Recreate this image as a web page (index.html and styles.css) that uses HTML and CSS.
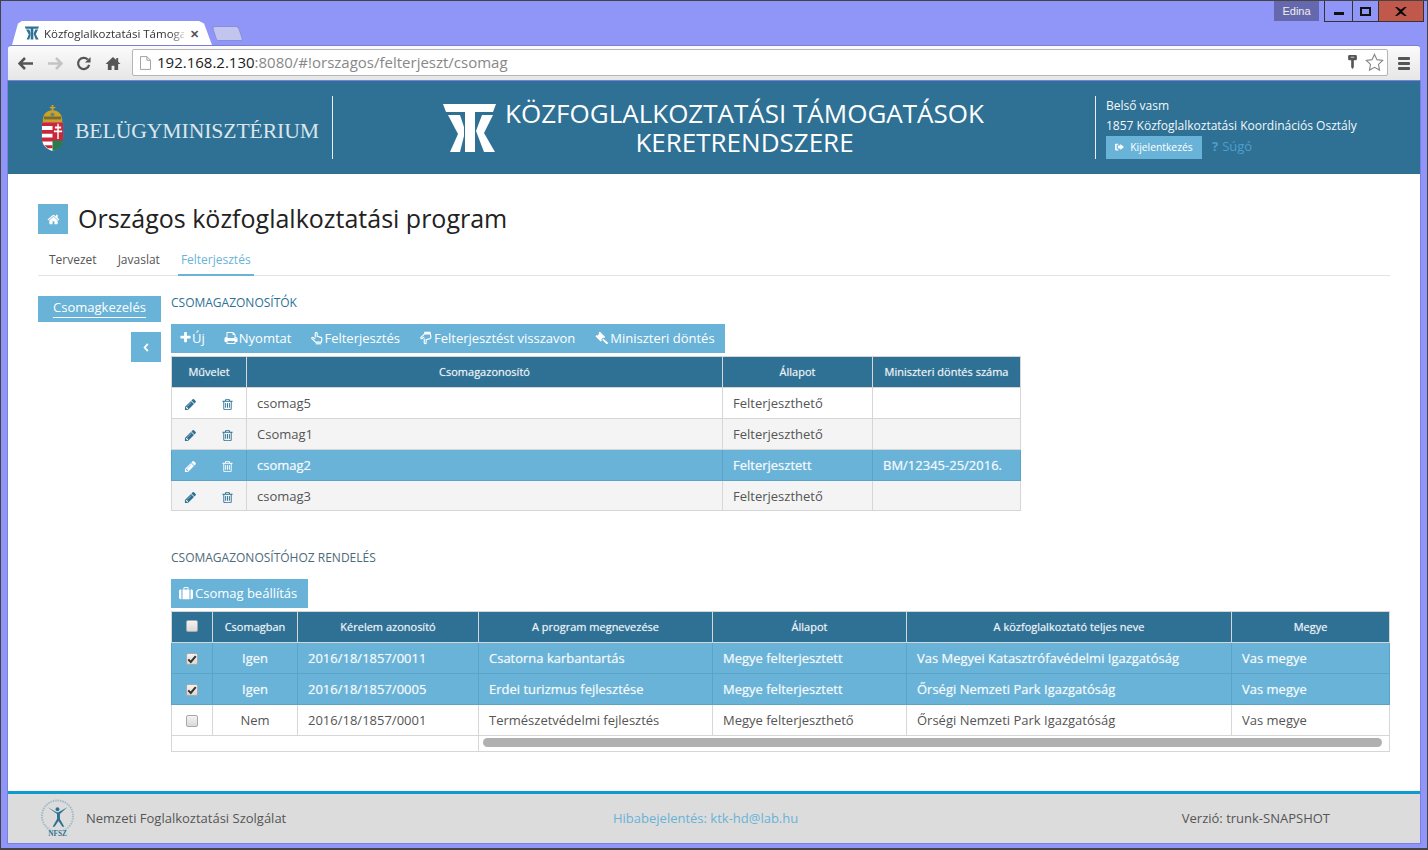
FILE: index.html
```html
<!DOCTYPE html>
<html lang="hu">
<head>
<meta charset="utf-8">
<title>Közfoglalkoztatási Támogatások Keretrendszere</title>
<link rel="stylesheet" href="styles.css">
</head>
<body>
<svg class="defs" aria-hidden="true">
  <symbol id="i-ktk" viewBox="0 0 60 56"><path d="M3 4H56L53 12H35V52H25V12H6Z"/><path d="M8 15H20L24 27V36L20 52H10L18 34Z"/><path d="M36 31L42 15H53L44 33L55 52H44Z"/></symbol>
  <symbol id="i-home" viewBox="0 0 1792 1792"><path d="M1472 992v480q0 26-19 45t-45 19h-384v-384h-256v384h-384q-26 0-45-19t-19-45v-480q0-1 .5-3t.5-3l575-474 575 474q1 2 1 6zm223-69l-62 74q-8 9-21 11h-3q-13 0-21-7l-692-577-692 577q-12 8-24 7-13-2-21-11l-62-74q-8-10-7-23.500t11-21.500l719-599q32-26 76-26t76 26l244 204v-195q0-14 9-23t23-9h192q14 0 23 9t9 23v408l219 182q10 8 11 21.500t-7 23.500z"/></symbol>
  <symbol id="i-plus" viewBox="0 0 1792 1792"><path d="M1600 736v192q0 40-28 68t-68 28h-416v416q0 40-28 68t-68 28h-192q-40 0-68-28t-28-68v-416h-416q-40 0-68-28t-28-68v-192q0-40 28-68t68-28h416v-416q0-40 28-68t68-28h192q40 0 68 28t28 68v416h416q40 0 68 28t28 68z"/></symbol>
  <symbol id="i-pencil" viewBox="0 0 1792 1792"><path d="M491 1536l91-91-235-235-91 91v107h128v128h107zm523-928q0-22-22-22-10 0-17 7l-542 542q-7 7-7 17 0 22 22 22 10 0 17-7l542-542q7-7 7-17zm-54-192l416 416-832 832h-416v-416zm683 96q0 53-37 90l-166 166-416-416 166-165q36-38 90-38 53 0 91 38l235 234q37 39 37 91z"/></symbol>
  <symbol id="i-trash" viewBox="0 0 1792 1792"><path d="M704 736v576q0 14-9 23t-23 9h-64q-14 0-23-9t-9-23v-576q0-14 9-23t23-9h64q14 0 23 9t9 23zm256 0v576q0 14-9 23t-23 9h-64q-14 0-23-9t-9-23v-576q0-14 9-23t23-9h64q14 0 23 9t9 23zm256 0v576q0 14-9 23t-23 9h-64q-14 0-23-9t-9-23v-576q0-14 9-23t23-9h64q14 0 23 9t9 23zm128 724v-948h-896v948q0 22 7 40.500t14.500 27 10.500 8.500h832q3 0 10.500-8.500t14.500-27 7-40.500zm-672-1076h448l-48-117q-7-9-17-11h-317q-10 2-17 11zm928 32v64q0 14-9 23t-23 9h-96v948q0 83-47 143.500t-113 60.500h-832q-66 0-113-58.500t-47-141.500v-952h-96q-14 0-23-9t-9-23v-64q0-14 9-23t23-9h309l70-167q15-37 54-63t79-26h320q40 0 79 26t54 63l70 167h309q14 0 23 9t9 23z"/></symbol>
  <symbol id="i-print" viewBox="0 0 1792 1792"><path d="M448 1536h896v-256h-896v256zm0-640h896v-384h-160q-40 0-68-28t-28-68v-160h-640v640zm1152 64q0-26-19-45t-45-19-45 19-19 45 19 45 45 19 45-19 19-45zm128 0v416q0 13-9.500 22.500t-22.500 9.500h-224v160q0 40-28 68t-68 28h-960q-40 0-68-28t-28-68v-160h-224q-13 0-22.500-9.500t-9.500-22.500v-416q0-79 56.500-135.500t135.500-56.500h64v-544q0-40 28-68t68-28h672q40 0 88 20t76 48l152 152q28 28 48 76t20 88v256h64q79 0 135.500 56.500t56.500 135.500z"/></symbol>
  <symbol id="i-hand-up" viewBox="0 0 16 16"><path class="outline" d="M6 7.500V2.600a1.100 1.100 0 0 1 2.200 0V6l4.300 1.300c.8.300 1.200.9 1.100 1.700l-.6 3.700H6.500L2.200 8.800c-.6-.7.300-1.900 1.200-1.300L6 9.200"/><path class="outline" d="M6.500 14.600h6.200"/></symbol>
  <symbol id="i-hand-down" viewBox="0 0 16 16"><path class="outline" d="M6 8.500v4.900a1.100 1.100 0 0 0 2.200 0V10l4.300-1.300c.8-.3 1.200-.9 1.100-1.700L13 3.300H6.500L2.200 7.200c-.6.700.3 1.900 1.200 1.300L6 6.800"/><path class="fillbar" d="M6 .8h7.200v2.500H6z"/></symbol>
  <symbol id="i-gavel" viewBox="0 0 16 16"><path d="M6.800 .8l6 6-1.500 1.500-.8-.8-2.200 2.200.8.800-1.500 1.500-6-6 1.500-1.500.8.800L6.100 2.600l-.8-.8z"/><path d="M9.400 10l1.200-1.200 4.900 4.100c.6.500.6 1.200.1 1.700s-1.200.5-1.700-.1z"/></symbol>
  <symbol id="i-suitcase" viewBox="0 0 16 14"><path d="M5 1.500C5 .7 5.700 0 6.500 0h3c.8 0 1.500.7 1.500 1.500V3h-1.200V1.300H6.200V3H5z"/><path d="M4 3h8v11H4zM2.800 3v11H1.800C.8 14 0 13.200 0 12.200V4.800C0 3.800.8 3 1.800 3zM13.200 3h1C15.200 3 16 3.800 16 4.800v7.400c0 1-.8 1.800-1.800 1.800h-1z"/></symbol>
  <symbol id="i-signout" viewBox="0 0 16 14"><path d="M1.500 1H6v2H3v8h3v2H1.500C.7 13 0 12.300 0 11.500v-9C0 1.700.7 1 1.500 1z"/><path d="M9.500 1.500L16 7l-6.500 5.500V9.500H5v-5h4.500z"/></symbol>
  <symbol id="i-check" viewBox="0 0 12 12"><path d="M1.500 6.500L4.500 9.500 10.500 2.500" fill="none" stroke="#333" stroke-width="2.400"/></symbol>
</svg>

<div class="window">
  <div class="titlebar">
    <div class="tabs">
      <div class="tab">
        <svg class="tab-logo"><use href="#i-ktk"/></svg>
        <span class="tab-title">Közfoglalkoztatási Támoga</span>
        <span class="tab-close">✕</span>
      </div>
      <div class="tab-new"></div>
    </div>
    <div class="winctl">
      <span class="winuser">Edina</span>
      <div class="winbtns">
        <span class="winbtn"><i class="ico-min"></i></span>
        <span class="winbtn winbtn-max"><i class="ico-max"></i></span>
        <span class="winbtn winbtn-close"><svg viewBox="0 0 12 10" class="ico-x"><path d="M1 0l4.800 3.400L10.600 0h1.200L7 5l4.800 5h-1.200L5.800 6.600 1 10H0l4.600-5L0 0z" stroke="#111" stroke-width="1"/></svg></span>
      </div>
    </div>
  </div>

  <div class="toolbar">
    <div class="navbtns">
      <svg class="nav" viewBox="0 0 16 14"><path d="M7 1.500L1.500 7 7 12.500M2 7h13" fill="none" stroke="#555" stroke-width="2.600"/></svg>
      <svg class="nav" viewBox="0 0 16 14"><path d="M9 1.500L14.500 7 9 12.500M14 7H1" fill="none" stroke="#c4c4c4" stroke-width="2.600"/></svg>
      <svg class="nav" viewBox="0 0 16 16"><path d="M13.500 9.500A6 6 0 1 1 12 3.700" fill="none" stroke="#555" stroke-width="2.400"/><path d="M15 1v6H9z" fill="#555"/></svg>
      <svg class="nav" viewBox="0 0 16 16"><path d="M8 1L0 8.500h2.500V15h4v-4.500h3V15h4V8.500H16L13.500 6V2h-2v2.200z" fill="#555"/></svg>
    </div>
    <div class="omnibox">
      <svg class="doc" viewBox="0 0 12 15"><path d="M.5.500h7l4 4v10H.500z M7.500.500v4h4" fill="#fff" stroke="#999"/></svg>
      <span class="url"><span class="url-host">192.168.2.130</span>:8080/#!orszagos/felterjeszt/csomag</span>
      <svg class="key" viewBox="0 0 10 16"><path d="M1.500 0h7A1.500 1.500 0 0 1 10 1.500v3A1.500 1.500 0 0 1 8.500 6h-2v8L5 16l-1.500-2V6h-2A1.500 1.500 0 0 1 0 4.500v-3A1.500 1.500 0 0 1 1.500 0z" fill="#555"/><path d="M3 2h4v1H3z" fill="#ddd"/></svg>
      <svg class="star" viewBox="0 0 20 20"><path d="M10 1.500l2.600 5.500 6 .8-4.400 4.200 1.100 6-5.300-2.900-5.300 2.900 1.100-6L1.400 7.800l6-.8z" fill="#fff" stroke="#888" stroke-width="1.200"/></svg>
    </div>
    <div class="burger"><i></i><i></i><i></i></div>
  </div>

  <div class="page">
    <header class="site-header">
      <div class="brand">
        <svg class="crest" viewBox="0 0 24 48">
          <path d="M11 0h2v2h2v1.500h-2V6h-2V3.500H9V2h2z" fill="#c9a227"/>
          <path d="M2 18C1 10 6 5.500 12 5.500S23 10 22 18z" fill="#c9a227"/>
          <path d="M3 12h18v3H3z" fill="#7b6a35"/>
          <circle cx="12" cy="10" r="2" fill="#6b7f86"/>
          <path d="M1 18h22v17c0 7-5 11-11 13C6 46 1 42 1 35z" fill="#fff"/>
          <path d="M1 18h11v4H1zM1 26h11v4H1zM1 34h11v4H1zM3.500 42H12v3H7zM12 18h11v20H12z" fill="#c8283a"/>
          <path d="M17 19.500h1.500v3H21v2h-2.500v2H22v2h-3.500v7H17v-7h-3.500v-2H17v-2h-2.500v-2H17z" fill="#fff"/>
          <path d="M12 37h11c0 6-5 10-11 11z" fill="#2c7a52"/>
        </svg>
        <span class="brand-name">Belügyminisztérium</span>
      </div>
      <div class="app-title">
        <svg class="app-logo"><use href="#i-ktk"/></svg>
        <h1 class="app-name">KÖZFOGLALKOZTATÁSI TÁMOGATÁSOK<br>KERETRENDSZERE</h1>
      </div>
      <div class="userbox">
        <div class="user-line user-name">Belső vasm</div>
        <div class="user-line">1857 Közfoglalkoztatási Koordinációs Osztály</div>
        <div class="user-actions">
          <a class="logout"><svg class="ic-signout"><use href="#i-signout"/></svg>Kijelentkezés</a>
          <a class="help"><b>?</b>Súgó</a>
        </div>
      </div>
    </header>

    <main class="content">
      <div class="page-title">
        <span class="home-box"><svg class="ic-home"><use href="#i-home"/></svg></span>
        <h2>Országos közfoglalkoztatási program</h2>
      </div>
      <nav class="tabs-nav">
        <a class="nav-tab">Tervezet</a>
        <a class="nav-tab">Javaslat</a>
        <a class="nav-tab active">Felterjesztés</a>
      </nav>
      <div class="cols">
        <aside class="side">
          <a class="side-item"><span>Csomagkezelés</span></a>
          <a class="side-toggle"><svg viewBox="0 0 8 12" class="ic-chev"><path d="M6 2L2.500 6 6 10" fill="none" stroke="#fff" stroke-width="2"/></svg></a>
        </aside>
        <section class="main">
          <h3 class="sec-title">CSOMAGAZONOSÍTÓK</h3>
          <div class="btnbar">
            <a class="btn"><svg class="ic ic-plus"><use href="#i-plus"/></svg>Új</a>
            <a class="btn"><svg class="ic"><use href="#i-print"/></svg>Nyomtat</a>
            <a class="btn"><svg class="ic ic-hand"><use href="#i-hand-up"/></svg>Felterjesztés</a>
            <a class="btn"><svg class="ic"><use href="#i-hand-down"/></svg>Felterjesztést visszavon</a>
            <a class="btn"><svg class="ic ic-gavel"><use href="#i-gavel"/></svg>Miniszteri döntés</a>
          </div>
          <table class="grid grid-a">
            <colgroup><col class="a1"><col class="a2"><col class="a3"><col class="a4"></colgroup>
            <thead><tr><th>Művelet</th><th>Csomagazonosító</th><th>Állapot</th><th>Miniszteri döntés száma</th></tr></thead>
            <tbody>
              <tr><td class="ops"><svg><use href="#i-pencil"/></svg><svg><use href="#i-trash"/></svg></td><td>csomag5</td><td>Felterjeszthető</td><td></td></tr>
              <tr class="alt"><td class="ops"><svg><use href="#i-pencil"/></svg><svg><use href="#i-trash"/></svg></td><td>Csomag1</td><td>Felterjeszthető</td><td></td></tr>
              <tr class="sel"><td class="ops"><svg><use href="#i-pencil"/></svg><svg><use href="#i-trash"/></svg></td><td>csomag2</td><td>Felterjesztett</td><td>BM/12345-25/2016.</td></tr>
              <tr class="alt last"><td class="ops"><svg><use href="#i-pencil"/></svg><svg><use href="#i-trash"/></svg></td><td>csomag3</td><td>Felterjeszthető</td><td></td></tr>
            </tbody>
          </table>

          <h3 class="sec-title sec-second">CSOMAGAZONOSÍTÓHOZ RENDELÉS</h3>
          <div class="btnbar">
            <a class="btn btn-solo"><svg class="ic ic-suit"><use href="#i-suitcase"/></svg>Csomag beállítás</a>
          </div>
          <table class="grid grid-b">
            <colgroup><col class="b1"><col class="b2"><col class="b3"><col class="b4"><col class="b5"><col class="b6"><col class="b7"></colgroup>
            <thead><tr><th><span class="cb"></span></th><th>Csomagban</th><th>Kérelem azonosító</th><th>A program megnevezése</th><th>Állapot</th><th>A közfoglalkoztató teljes neve</th><th>Megye</th></tr></thead>
            <tbody>
              <tr class="sel"><td class="c"><span class="cb"><svg><use href="#i-check"/></svg></span></td><td class="c">Igen</td><td>2016/18/1857/0011</td><td>Csatorna karbantartás</td><td>Megye felterjesztett</td><td>Vas Megyei Katasztrófavédelmi Igazgatóság</td><td>Vas megye</td></tr>
              <tr class="sel"><td class="c"><span class="cb"><svg><use href="#i-check"/></svg></span></td><td class="c">Igen</td><td>2016/18/1857/0005</td><td>Erdei turizmus fejlesztése</td><td>Megye felterjesztett</td><td>Őrségi Nemzeti Park Igazgatóság</td><td>Vas megye</td></tr>
              <tr><td class="c"><span class="cb"></span></td><td class="c">Nem</td><td>2016/18/1857/0001</td><td>Természetvédelmi fejlesztés</td><td>Megye felterjeszthető</td><td>Őrségi Nemzeti Park Igazgatóság</td><td>Vas megye</td></tr>
              <tr class="scrollrow"><td colspan="3"></td><td colspan="4"><div class="thumb"></div></td></tr>
            </tbody>
          </table>
        </section>
      </div>
    </main>

    <footer class="site-footer">
      <div class="foot-left">
        <svg class="nfsz" viewBox="0 0 38 38">
          <circle cx="19" cy="17" r="16" fill="none" stroke="#9dbbc9" stroke-width="2" stroke-dasharray="1.500 1"/>
          <circle cx="19" cy="10" r="2" fill="#2e7195"/>
          <path d="M9 8l9 5h2l9-5-7.500 7v5l4.500 8h-2l-4-6-4 6h-2l4.500-8v-5z" fill="#2e7195"/>
          <rect x="9" y="31" width="20" height="7" fill="#dcdcdc"/>
          <text x="19" y="37" class="nfsz-t" text-anchor="middle">NFSZ</text>
        </svg>
        <span>Nemzeti Foglalkoztatási Szolgálat</span>
      </div>
      <a class="foot-mid">Hibabejelentés: ktk-hd@lab.hu</a>
      <div class="foot-right">Verzió: trunk-SNAPSHOT</div>
    </footer>
  </div>
</div>
</body>
</html>
```

FILE: styles.css
```css
* { box-sizing: border-box; }
html, body { margin: 0; padding: 0; }
body {
  width: 1428px; height: 850px; overflow: hidden;
  font-family: "Open Sans", sans-serif; font-size: 13px; color: #555;
  background: #9095f8;
}
.defs { display: none; }
a { color: inherit; text-decoration: none; }

.window {
  height: 850px; display: flex; flex-direction: column;
  border: 1px solid #444; border-width: 1px 1px 2px 1px;
  padding: 0 7px 5px 7px;
}

/* chrome title bar */
.titlebar { height: 44px; flex: none; display: flex; justify-content: space-between; margin: 0 -6px 0 0; }
.tabs { display: flex; align-items: flex-end; margin-left: 4px; }
.tab {
  width: 200px; height: 24px; display: flex; align-items: center;
  background: #fff; border-radius: 4px 6px 0 0;
  clip-path: polygon(0 100%, 6px 10%, 10px 0, 187px 0, 192px 10%, 200px 100%);
  padding: 0 15px 0 12px;
}
.tab-logo { width: 16px; height: 16px; fill: #2e7195; flex: none; margin-right: 4px; }
.tab-title {
  font-family: "Open Sans", sans-serif; font-size: 11.500px; color: #333; white-space: nowrap; width: 140px; flex: none;
  -webkit-mask-image: linear-gradient(to right, #000 90%, rgba(0,0,0,.25));
  mask-image: linear-gradient(to right, #000 90%, rgba(0,0,0,.25));
}
.tab-close { font-size: 11px; color: #555; margin-left: 6px; font-weight: 700; }
.tab-new {
  width: 27px; height: 15px; margin: 0 0 4px 2px; background: #c2c6ee; border: 1px solid #8a8ddb;
  border-radius: 3px 3px 2px 2px; transform: skewX(18deg);
}
.winctl { display: flex; align-items: flex-start; }
.winuser {
  width: 45px; height: 20px; margin-right: 5px; background: #6568ad; color: #eee;
  font-family: "Liberation Sans", sans-serif; font-size: 11px; line-height: 20px; text-align: center;
}
.winbtns { display: flex; height: 21px; border: 1px solid #333; border-top: 0; margin-right: 2px; }
.winbtn { width: 28px; display: flex; align-items: center; justify-content: center; border-right: 1px solid #333; }
.winbtn-max { width: 26px; }
.winbtn-close { width: 44px; border-right: 0; background: #c0584c; }
.ico-min { width: 10px; height: 3px; background: #111; margin-top: 5px; }
.ico-max { width: 11px; height: 9px; border: 2px solid #111; }
.ico-x { width: 12px; height: 9px; }

/* chrome toolbar */
.toolbar {
  height: 36px; flex: none; display: flex; align-items: center;
  background: linear-gradient(#fbfbfb, #e6e6e6);
  border-top: 1px solid #7a7ed0; border-bottom: 1px solid #a8a8a8; border-radius: 3px 3px 0 0;
  padding-left: 10px;
}
.navbtns { display: flex; width: 114px; gap: 13px; align-items: center; flex: none; }
.nav { width: 16px; height: 15px; flex: none; }
.omnibox {
  flex: 1; height: 27px; display: flex; align-items: center; margin-top: -1px;
  background: #fff; border: 1px solid #b5b5b5; border-radius: 2px; padding: 0 3px 0 7px;
}
.doc { width: 11px; height: 14px; margin-right: 6px; flex: none; }
.url { font-family: "Open Sans", sans-serif; font-size: 15px; color: #888; flex: 1; white-space: nowrap; margin-top: -2px; }
.url-host { color: #222; }
.key { width: 9px; height: 14px; margin-right: 8px; margin-top: -2px; flex: none; }
.star { width: 19px; height: 19px; flex: none; }
.burger { width: 32px; display: flex; flex-direction: column; gap: 2px; align-items: center; flex: none; }
.burger i { width: 12px; height: 3px; background: #555; border-radius: 1px; }

/* page */
.page { flex: 1; min-height: 0; background: #fff; display: flex; flex-direction: column; box-shadow: 0 0 0 1px #7a7ee0; }
.site-header {
  height: 93px; flex: none; background: #2e7195; display: flex; align-items: flex-start; color: #fff; padding-top: 15px;
}
.brand {
  width: 325px; height: 63px; flex: none; display: flex; align-items: center;
  padding: 0 0 0 33px; border-right: 1px solid #e8eef2;
}
.crest { width: 23px; height: 48px; flex: none; margin-right: 11px; }
.brand-name { font-family: "Liberation Serif", serif; font-size: 21.700px; color: #dbe6ec; text-transform: uppercase; white-space: nowrap; letter-spacing: -.1px; margin-top: 7px; }
.app-title { width: 762px; flex: none; display: flex; padding: 3px 0 0 110px; }
.app-logo { width: 60px; height: 56px; fill: #fff; flex: none; margin: 1px -2px 0 -3px; }
.app-name {
  margin: 0; width: 493px; font-size: 26px; line-height: 29px; font-weight: 400; text-align: center; color: #fff; white-space: nowrap;
}
.userbox { height: 63px; flex: 1; border-left: 1px solid #e8eef2; padding: 0 0 0 10px; font-size: 12px; }
.user-line { height: 20px; line-height: 20px; white-space: nowrap; color: #f4f7f9; }
.user-actions { display: flex; align-items: flex-start; }
.logout {
  width: 96px; height: 23px; padding-bottom: 2px; background: #69b3d8; color: #fff; font-size: 10.300px; display: flex; align-items: center; justify-content: center; gap: 6px;
}
.ic-signout { width: 9px; height: 8px; fill: #fff; }
.help { margin-left: 10px; color: #4f9ecb; font-size: 13px; line-height: 20px; }
.help b { color: #4f9ecb; margin-right: 4px; }

.content { flex: 1; min-height: 0; padding: 30px 30px 0 30px; }
.page-title { display: flex; align-items: center; height: 30px; }
.home-box { width: 30px; height: 30px; background: #69b3d8; display: flex; align-items: center; justify-content: center; }
.ic-home { width: 13px; height: 13px; fill: #fff; }
.page-title h2 { margin: -2px 0 0 10px; font-size: 25px; font-weight: 400; color: #222; line-height: 30px; white-space: nowrap; }
.tabs-nav { display: flex; margin-top: 13px; height: 29px; border-bottom: 1px solid #e3e3e3; }
.nav-tab { height: 29px; font-size: 12px; line-height: 25px; color: #555; margin-right: 15px; padding: 0 3px; }
.nav-tab:first-child { margin-left: 8px; }
.nav-tab.active { color: #69b3d8; border-bottom: 2px solid #69b3d8; }

.cols { display: flex; margin-top: 20px; }
.side { width: 123px; flex: none; display: flex; flex-direction: column; align-items: flex-end; }
.side-item { width: 123px; height: 26px; background: #69b3d8; color: #fff; text-align: center; font-size: 13px; line-height: 23px; }
.side-item span { border-bottom: 1px solid #fff; padding-bottom: 1px; }
.side-toggle { width: 30px; height: 30px; margin-top: 10px; background: #69b3d8; display: flex; align-items: center; justify-content: center; }
.ic-chev { width: 8px; height: 11px; }
.main { margin-left: 10px; flex: 1; min-width: 0; }
.sec-title { margin: 0; font-size: 12px; font-weight: 400; color: #2e7195; line-height: 14px; height: 14px; }
.sec-second { margin-top: 40px; color: #4d6a7a; }
.btnbar { display: flex; margin-top: 14px; }
.btn {
  height: 29px; padding: 0 9px 2px 10px; background: #69b3d8; color: #fff; font-size: 13px; display: flex; align-items: center; white-space: nowrap;
}
.btn:first-child { padding-left: 8px; }
.btn:last-child { padding-right: 10px; }
.btn.btn-solo { padding-right: 11px; }
.ic { width: 14px; height: 14px; fill: #fff; margin-right: 1px; flex: none; }
.ic-plus { width: 13px; height: 13px; margin-right: 0; }
.ic-hand { margin-right: 0; }
.ic-gavel { margin-right: 2px; }
.ic-suit { margin-right: 2px; }
.outline { fill: none; stroke: #fff; stroke-width: 1.300; }
.fillbar { fill: #fff; }

.grid { border-collapse: collapse; table-layout: fixed; margin-top: 3px; font-size: 13px; }
.grid th {
  background: #2e7195; color: #eef4f7; font-size: 11px; font-weight: 400; height: 31px; border: 1px solid #d6d6d6; padding: 0 0 2px; text-align: center;
  text-shadow: 0 0 1px rgba(255,255,255,.55);
}
.grid td { height: 31px; border: 1px solid #d6d6d6; padding: 0 10px; color: #555; white-space: nowrap; background: #fff; }
.grid tr.alt td { background: #f4f4f4; }
.grid tr.last td { height: 30px; }
.grid tr.sel td { background: #69b3d8; color: #f5fafc; border-color: #5aa3c9; text-shadow: 0 0 1px rgba(255,255,255,.55); }
.grid-a { width: 849px; }
.a1 { width: 75px; } .a2 { width: 476px; } .a3 { width: 150px; } .a4 { width: 148px; }
.grid td.ops { padding: 0; }
.ops svg { width: 13px; height: 13px; fill: #2e7195; display: inline-block; vertical-align: middle; margin-left: 12px; margin-right: 12px; }
.ops svg + svg { margin-left: 12px; margin-right: 0; }
.sel .ops svg { fill: #fff; }
.grid-b { width: 1218px; }
.b1 { width: 41px; } .b2 { width: 85px; } .b3 { width: 181px; } .b4 { width: 234px; } .b5 { width: 194px; } .b6 { width: 325px; } .b7 { width: 158px; }
.grid td.c { text-align: center; padding: 0; }
.cb {
  display: inline-block; width: 12px; height: 12px; vertical-align: middle; margin-bottom: 2px;
  background: linear-gradient(#f3f3f3, #d9d9d9); border: 1px solid #a9a9a9; border-radius: 2px;
}
.cb svg { display: block; width: 10px; height: 10px; }
.grid .scrollrow td { height: 16px; padding: 2px 7px 0 4px; vertical-align: top; }
.thumb { height: 9px; background: #b0b0b0; border-radius: 5px; }

.site-footer {
  height: 52px; flex: none; background: #dcdcdc; border-top: 3px solid #0e9bd1; font-size: 13px;
  display: grid; grid-template-columns: 574px auto 1fr; align-items: center;
  padding: 0 90px 2px 31px;
}
.foot-left { display: flex; align-items: center; gap: 10px; color: #555; }
.nfsz { width: 37px; height: 38px; flex: none; }
.nfsz-t { font-family: "Liberation Serif", serif; font-size: 7.500px; font-weight: 700; fill: #2e7195; }
.foot-mid { color: #69b3d8; }
.foot-right { color: #555; white-space: nowrap; justify-self: end; }
```
